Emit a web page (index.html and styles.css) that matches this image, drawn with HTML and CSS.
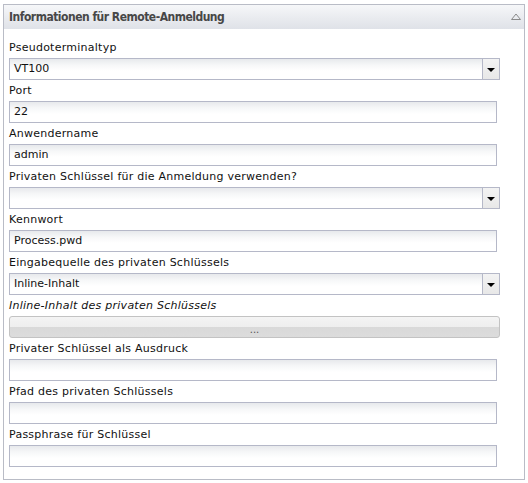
FILE: index.html
```html
<!DOCTYPE html>
<html lang="de">
<head>
<meta charset="utf-8">
<title>Informationen für Remote-Anmeldung</title>
<link rel="stylesheet" href="styles.css">
</head>
<body>
<div class="panel">
  <div class="panel-header">
    <span class="panel-title">Informationen für Remote-Anmeldung</span>
    <svg class="collapse" width="10" height="7" viewBox="0 0 10 7"><path d="M0.5 6.5 L5 1 L9.5 6.5 Z" fill="none" stroke="#8a8a8a" stroke-width="1"/></svg>
  </div>
  <div class="panel-body">
    <div class="field">
      <div class="label">Pseudoterminaltyp</div>
      <div class="select"><span class="value">VT100</span><span class="trigger"><span class="arrow"></span></span></div>
    </div>
    <div class="field">
      <div class="label">Port</div>
      <div class="input"><span class="value">22</span></div>
    </div>
    <div class="field">
      <div class="label">Anwendername</div>
      <div class="input"><span class="value">admin</span></div>
    </div>
    <div class="field">
      <div class="label">Privaten Schlüssel für die Anmeldung verwenden?</div>
      <div class="select"><span class="value"></span><span class="trigger"><span class="arrow"></span></span></div>
    </div>
    <div class="field">
      <div class="label">Kennwort</div>
      <div class="input"><span class="value">Process.pwd</span></div>
    </div>
    <div class="field">
      <div class="label">Eingabequelle des privaten Schlüssels</div>
      <div class="select"><span class="value">Inline-Inhalt</span><span class="trigger"><span class="arrow"></span></span></div>
    </div>
    <div class="field">
      <div class="label italic">Inline-Inhalt des privaten Schlüssels</div>
      <div class="button"><span class="dots">...</span></div>
    </div>
    <div class="field">
      <div class="label">Privater Schlüssel als Ausdruck</div>
      <div class="input"><span class="value"></span></div>
    </div>
    <div class="field">
      <div class="label">Pfad des privaten Schlüssels</div>
      <div class="input"><span class="value"></span></div>
    </div>
    <div class="field">
      <div class="label">Passphrase für Schlüssel</div>
      <div class="input"><span class="value"></span></div>
    </div>
  </div>
</div>
</body>
</html>
```
FILE: styles.css
```css
html, body {
  margin: 0;
  padding: 0;
  background: #ffffff;
}
body {
  font-family: "DejaVu Sans", Verdana, sans-serif;
  font-size: 11px;
  color: #111;
  padding: 4px 0 0 3px;
}
.panel {
  width: 522px;
  box-sizing: border-box;
  border: 1px solid #b9bcc6;
  background: #fff;
}
.panel-header {
  height: 24px;
  display: flex;
  align-items: center;
  justify-content: space-between;
  padding: 0 3px 0 5px;
  background: linear-gradient(to bottom, #f6f7f9 0%, #e9ebef 55%, #dfe2e8 100%);
}
.panel-title {
  font-family: "DejaVu Sans Condensed", "DejaVu Sans", sans-serif;
  font-weight: bold;
  font-size: 12px;
  color: #474747;
  letter-spacing: -0.5px;
}
.collapse {
  display: block;
  margin-top: -1px;
}
.panel-body {
  display: flex;
  flex-direction: column;
  padding: 8px 0 12px 5px;
}
.field {
  display: flex;
  flex-direction: column;
}
.label {
  height: 21px;
  line-height: 21px;
  white-space: nowrap;
  letter-spacing: 0.25px;
}
.italic {
  font-style: italic;
}
.input, .select {
  height: 22px;
  box-sizing: border-box;
  border: 1px solid #b5b8c8;
  background: linear-gradient(to bottom, #e7e9ec 0px, #f6f7f8 6px, #ffffff 12px);
  display: flex;
  align-items: center;
}
.input {
  width: 488px;
}
.select {
  width: 491px;
}
.value {
  flex: 1;
  padding-left: 4px;
  line-height: 20px;
}
.trigger {
  width: 16px;
  height: 100%;
  border-left: 1px solid #b5b8c8;
  background: linear-gradient(to bottom, #f3f3f3, #e8e8e8);
  display: flex;
  align-items: center;
  justify-content: center;
}
.arrow {
  width: 0;
  height: 0;
  border-left: 4px solid transparent;
  border-right: 4px solid transparent;
  border-top: 4px solid #000;
  margin-top: 1px;
}
.button {
  width: 491px;
  height: 22px;
  box-sizing: border-box;
  border: 1px solid #c3c3c3;
  border-radius: 3px;
  background: linear-gradient(to bottom, #f4f4f4 0%, #eeeeee 50%, #d9d9d9 52%, #dcdcdc 100%);
  display: flex;
  align-items: center;
  justify-content: center;
}
.dots {
  color: #555;
  font-size: 10px;
  line-height: 10px;
  margin-top: 6px;
}
```
